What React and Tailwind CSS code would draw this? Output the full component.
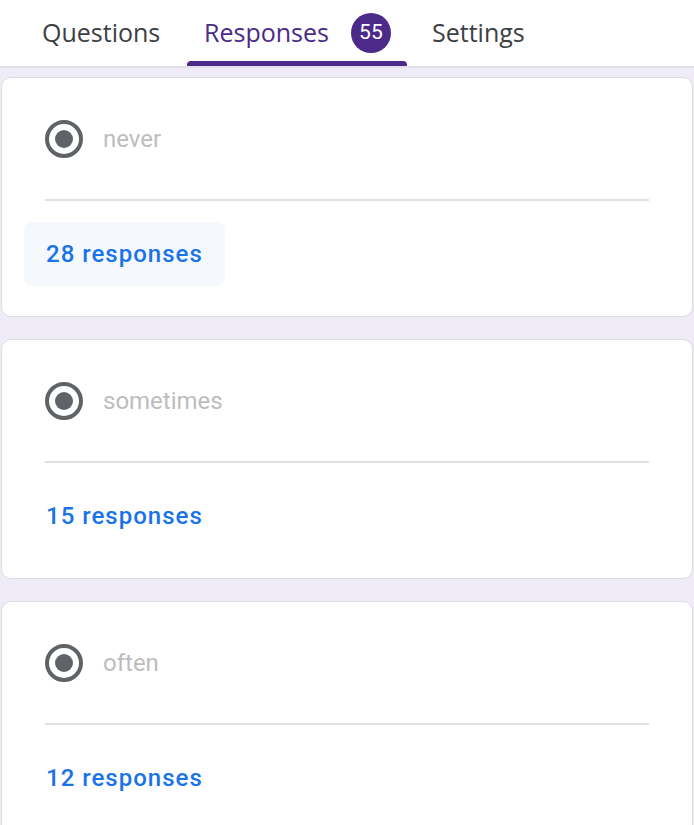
const options = [
  { label: 'never', count: 28, highlighted: true },
  { label: 'sometimes', count: 15 },
  { label: 'often', count: 12 },
]

function Radio() {
  return (
    <div className="flex h-[38px] w-[38px] items-center justify-center rounded-full border-[4px] border-[#5f6368]">
      <div className="h-[18px] w-[18px] rounded-full bg-[#5f6368]" />
    </div>
  )
}

function OptionCard({ label, count, highlighted }) {
  return (
    <div className="mx-[1px] h-[240px] rounded-[10px] border border-[#dadce0] bg-white">
      <div className="flex h-[121px] items-center gap-[20px] pl-[43px]">
        <Radio />
        <span className="text-[24px] text-[#bdbdbd]">{label}</span>
      </div>
      <div className="mx-[43px] h-[2px] bg-[#e0e0e0]" />
      <div className="pl-[22px] pt-[21px]">
        <div
          className={`inline-flex h-[64px] w-[201px] items-center pl-[22px] rounded-[8px] ${
            highlighted ? 'bg-[#f5f9fe]' : ''
          }`}
        >
          <span className="text-[24px] font-medium tracking-[1px] text-[#1a73e8]">
            {count} responses
          </span>
        </div>
      </div>
    </div>
  )
}

export default function App() {
  return (
    <div className="h-[825px] overflow-hidden bg-[#efebf7] font-['Roboto',sans-serif]">
      <header className="flex h-[68px] items-stretch border-b-2 border-[#e3e0ea] bg-white font-['Open_Sans',sans-serif]">
        <div className="flex w-[187px] items-center pl-[42px]">
          <span className="text-[25px] text-[#3c4043]">Questions</span>
        </div>
        <div className="relative flex w-[220px] items-center pl-[17px]">
          <span className="text-[25px] text-[#4b2a8a]">Responses</span>
          <span className="ml-[22px] flex h-[40px] w-[40px] items-center justify-center rounded-full bg-[#4b2a8a] font-['Roboto',sans-serif] text-[21px] text-white">
            55
          </span>
          <div className="absolute bottom-0 left-0 right-0 h-[5px] rounded-t-[4px] bg-[#4b2a8a]" />
        </div>
        <div className="flex items-center pl-[25px]">
          <span className="text-[25px] text-[#3c4043]">Settings</span>
        </div>
      </header>
      <main className="flex flex-col gap-[22px] pt-[9px]">
        {options.map((option) => (
          <OptionCard key={option.label} {...option} />
        ))}
      </main>
    </div>
  )
}
